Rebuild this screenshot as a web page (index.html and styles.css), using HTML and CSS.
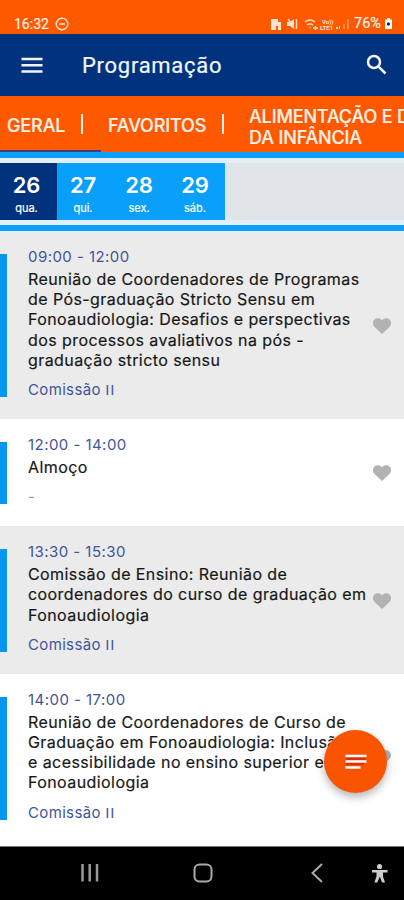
FILE: index.html
```html
<!DOCTYPE html>
<html lang="pt-BR">
<head>
<meta charset="utf-8">
<meta name="viewport" content="width=device-width, initial-scale=1">
<title>Programação</title>
<link rel="stylesheet" href="styles.css">
</head>
<body>
<div class="phone">
  <div class="status">
    <span class="clock">16:32</span>
    <svg class="dnd" width="14" height="14" viewBox="0 0 14 14"><circle cx="7" cy="7" r="5.8"/><path d="M4 7h6"/></svg>
    <svg class="indicators" width="82" height="14" viewBox="0 0 82 14">
      <path class="fill" d="M1 2h7v3h3v8H8V9H6v4H1z"/>
      <path class="fill" d="M17 5h3l4-3v10l-4-3h-3z"/><path class="line" d="M18 2l6 9M26.500 2v10"/>
      <path class="line" d="M35 5q5-4 10 0M37 8q3-2 6 0M39.500 10.500h1M43 11h5M45.500 9v4"/>
      <text x="52" y="7">Vo))</text><text x="50" y="13">LTE1</text>
      <path class="fill" d="M66 12h2v-2h-2zM69 12h1V9h-1z"/><path class="faint" d="M73 12V7h2v5zM77 12V2h2v10z"/>
    </svg>
    <span class="battery-level">76%</span>
    <svg class="battery" width="9" height="13" viewBox="0 0 9 13"><path class="fill" d="M3 1h3v1.500h2V12H1V2.500h2z"/><circle cx="4.500" cy="7" r="1.700"/></svg>
  </div>

  <header class="appbar">
    <svg class="menu" width="22" height="16" viewBox="0 0 22 16"><path d="M.5 2h21M.5 8.200h21M.5 14.400h21"/></svg>
    <h1>Programação</h1>
    <svg class="search" width="22" height="22" viewBox="0 0 22 22"><circle cx="8" cy="8" r="6"/><path d="M12.300 12.300l7.200 7.200"/></svg>
  </header>

  <nav class="tabs">
    <div class="tab active"><span>GERAL</span><i></i></div>
    <div class="tab favorites"><span>FAVORITOS</span><i></i></div>
    <div class="tab wide"><span>ALIMENTAÇÃO E D<br>DA INFÂNCIA</span></div>
  </nav>

  <div class="days">
    <div class="day selected"><b>26</b><small>qua.</small></div>
    <div class="day"><b>27</b><small>qui.</small></div>
    <div class="day"><b>28</b><small>sex.</small></div>
    <div class="day"><b>29</b><small>sáb.</small></div>
    <div class="days-rest"></div>
  </div>

  <main class="list">
    <article class="event">
      <div class="mark"></div>
      <div class="info">
        <time>09:00 - 12:00</time>
        <h2>Reunião de Coordenadores de Programas<br>de Pós-graduação Stricto Sensu em<br>Fonoaudiologia: Desafios e perspectivas<br>dos processos avaliativos na pós -<br>graduação stricto sensu</h2>
        <p>Comissão <span class="roman">II</span></p>
      </div>
      <svg class="heart" viewBox="0 0 18 16"><path d="M9 16L1.600 9C-3 4 3-3 9 2.200C15-3 21 4 16.400 9z"/></svg>
    </article>
    <article class="event">
      <div class="mark"></div>
      <div class="info">
        <time>12:00 - 14:00</time>
        <h2>Almoço</h2>
        <p class="none">-</p>
      </div>
      <svg class="heart" viewBox="0 0 18 16"><path d="M9 16L1.600 9C-3 4 3-3 9 2.200C15-3 21 4 16.400 9z"/></svg>
    </article>
    <article class="event">
      <div class="mark"></div>
      <div class="info">
        <time>13:30 - 15:30</time>
        <h2>Comissão de Ensino: Reunião de<br>coordenadores do curso de graduação em<br>Fonoaudiologia</h2>
        <p>Comissão <span class="roman">II</span></p>
      </div>
      <svg class="heart" viewBox="0 0 18 16"><path d="M9 16L1.600 9C-3 4 3-3 9 2.200C15-3 21 4 16.400 9z"/></svg>
    </article>
    <article class="event">
      <div class="mark"></div>
      <div class="info">
        <time>14:00 - 17:00</time>
        <h2>Reunião de Coordenadores de Curso de<br>Graduação em Fonoaudiologia: Inclusão<br>e acessibilidade no ensino superior em<br>Fonoaudiologia</h2>
        <p>Comissão <span class="roman">II</span></p>
      </div>
      <svg class="heart" viewBox="0 0 18 16"><path d="M9 16L1.600 9C-3 4 3-3 9 2.200C15-3 21 4 16.400 9z"/></svg>
    </article>
  </main>

  <button class="fab" aria-label="Filtrar"><svg width="22" height="16" viewBox="0 0 22 16"><path class="gap" d="M1 4.500h20M1 9.500h18"/><path d="M.5 2h21M.5 7.500h21M.5 13.500h15"/></svg></button>

  <footer class="navbar">
    <svg width="404" height="53" viewBox="0 0 404 53">
      <path class="recents" d="M82.500 17v17.500M89.700 17v17.500M97 17v17.500"/>
      <rect class="home" x="194.500" y="17.500" width="17" height="17" rx="5"/>
      <path class="back" d="M322 17l-9.500 9L322 35"/>
      <g class="person"><circle cx="379.500" cy="19.500" r="2.600"/><path d="M372 23h15.500v2.500H383v4l2 6h-3l-2.200-6-2.500 6h-3l2.200-6v-4H372z"/></g>
    </svg>
  </footer>
</div>
</body>
</html>
```
FILE: styles.css
```css
* { box-sizing: border-box; }
body { margin: 0; font-family: Inter, "Noto Sans", sans-serif; }
h1, h2, p { margin: 0; font-weight: 400; }
svg { display: block; flex: none; }

.phone { position: relative; width: 404px; height: 900px; overflow: hidden; display: flex; flex-direction: column; background: #fff; }

.status { height: 34px; flex: none; background: #ff5900; color: #fff0e8; display: flex; align-items: flex-start; padding: 17px 11px 0 14px; font: 14px/14px Roboto, sans-serif; }
.clock { width: 37px; -webkit-text-stroke: .2px; }
.dnd { margin-left: 4px; fill: none; stroke: #ffe4d6; stroke-width: 1.400; }
.indicators { margin-left: auto; fill: #ffe4d6; font: 700 6px Roboto, sans-serif; }
.indicators .line { fill: none; stroke: #ffd9c5; stroke-width: 1.500; }
.indicators .faint { fill: #ff8b55; }
.battery-level { margin-left: 2px; width: 29px; font-size: 14.500px; -webkit-text-stroke: .2px; }
.battery { margin-left: 1px; fill: #fff; }
.battery circle { fill: #30352c; }

.appbar { height: 62px; flex: none; background: #00327d; display: flex; align-items: center; padding: 0 16px 0 21px; color: #f2f5ff; }
.appbar svg { fill: none; stroke: #f2f5ff; stroke-width: 2.500; }
.appbar h1 { margin-left: 39px; font: 22px/30px Roboto, sans-serif; letter-spacing: .72px; padding-top: 2px; -webkit-text-stroke: .2px; }
.appbar .search { margin-left: auto; }

.tabs { height: 56px; flex: none; background: #ff5900; display: flex; color: #fff0e8; font-size: 18px; line-height: 21px; font-weight: 500; overflow: hidden; white-space: nowrap; -webkit-text-stroke: .2px; }
.tab { display: flex; flex: none; align-items: center; padding-top: 3px; }
.tab i { width: 2px; height: 20px; background: #fff0e8; margin-top: -3px; }
.tab.active { width: 101px; padding-left: 7px; border-bottom: 2px solid #3b4376; padding-top: 5px; }
.tab.active span { width: 74px; letter-spacing: -.1px; }
.tab.favorites { width: 148px; padding-left: 7px; }
.tab.favorites span { width: 114px; letter-spacing: -.15px; }
.tab.wide { padding-top: 6px; }
.tab.wide span { letter-spacing: -.15px; }

.days { height: 79px; flex: none; display: flex; border-top: 6px solid #08a0fa; border-bottom: 6px solid #08a0fa; padding: 5px 0; background: #e6eef5; color: #fff; }
.day { width: 56px; padding-right: 4px; background: #08a0fa; display: flex; flex-direction: column; align-items: center; padding-top: 9px; }
.day.selected { width: 57px; background: #00327d; }
.day b { font-size: 22px; line-height: 27px; font-weight: 600; letter-spacing: -.2px; }
.day small { font-size: 11px; line-height: 16px; margin-top: 1px; -webkit-text-stroke: .2px; }
.days-rest { flex: 1; background: #e1e4e9; }

.list { height: 616px; flex: none; overflow: hidden; border-bottom: 1px solid #777; }
.event { display: flex; background: #fff; padding: 17px 0 20px; }
.event:nth-child(odd) { background: #ebebeb; }
.mark { width: 7px; flex: none; background: #0796ed; margin: 6px 0 2px; }
.info { width: 345px; margin-left: 21px; white-space: nowrap; }
.info time, .info p { display: block; font-size: 15px; line-height: 18px; color: #42559a; letter-spacing: .45px; }
.info p { letter-spacing: .35px; }
.info .roman { font-family: "Liberation Sans", sans-serif; letter-spacing: .7px; }
.info h2 { margin: 3px 0 11px; font-size: 16px; line-height: 20.200px; color: #181818; letter-spacing: .42px; -webkit-text-stroke: .2px; }
.info .none { color: #999; }
.heart { width: 18px; height: 16px; align-self: center; margin-top: 4px; fill: #b2b2b2; }

.fab { position: absolute; left: 324px; top: 730px; width: 63px; height: 63px; border: 0; border-radius: 50%; background: #fb5400; display: grid; place-items: center; box-shadow: 0 4px 8px rgba(0, 0, 0, .3); }
.fab svg { fill: none; stroke: #fff; stroke-width: 2.300; }
.fab .gap { stroke: #e22b00; stroke-width: 3; }

.navbar { height: 53px; flex: none; background: #000; }
.navbar svg { fill: none; stroke: #aaa; stroke-width: 2; }
.navbar .recents { stroke: #999; stroke-width: 2.500; }
.navbar .person { fill: #ccc; stroke: none; }
```
